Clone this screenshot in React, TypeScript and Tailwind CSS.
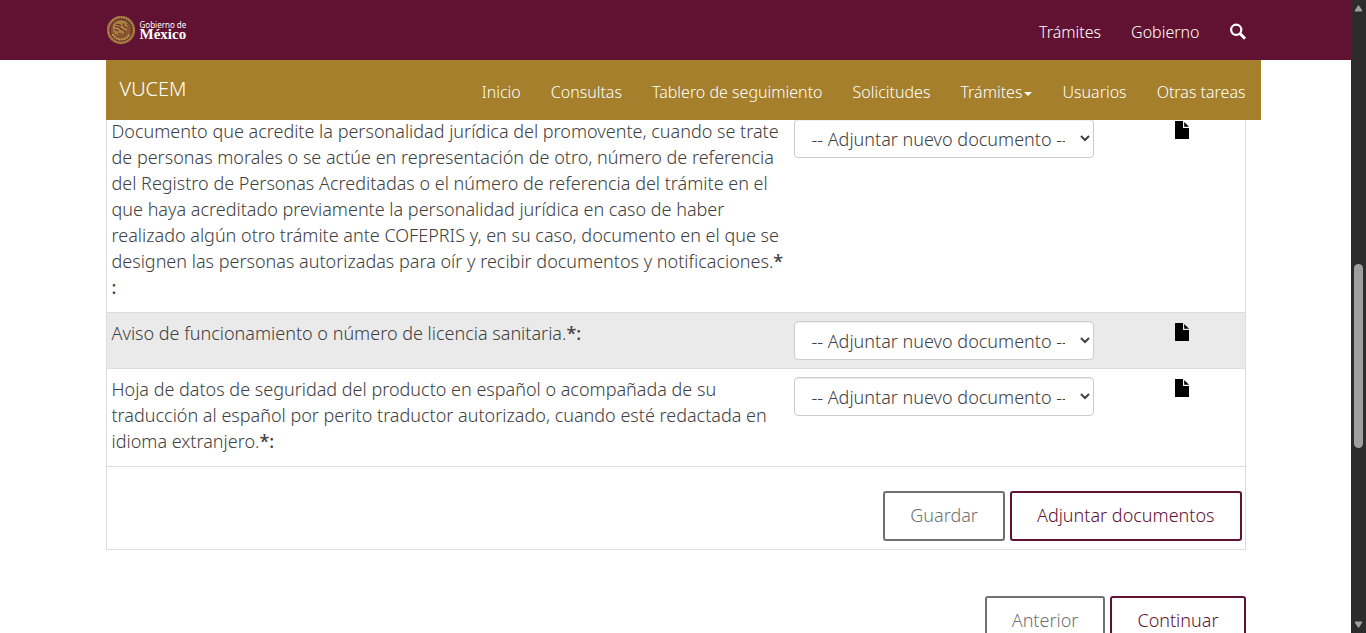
import React from "react";

const navItems = [
  "Inicio",
  "Consultas",
  "Tablero de seguimiento",
  "Solicitudes",
  "Trámites",
  "Usuarios",
  "Otras tareas",
];

const documents = [
  {
    id: "personalidad",
    text: "Documento que acredite la personalidad jurídica del promovente, cuando se trate de personas morales o se actúe en representación de otro, número de referencia del Registro de Personas Acreditadas o el número de referencia del trámite en el que haya acreditado previamente la personalidad jurídica en caso de haber realizado algún otro trámite ante COFEPRIS y, en su caso, documento en el que se designen las personas autorizadas para oír y recibir documentos y notificaciones.",
    mark: "*\n:",
  },
  { id: "aviso", text: "Aviso de funcionamiento o número de licencia sanitaria.", mark: "*:" },
  {
    id: "hoja",
    text: "Hoja de datos de seguridad del producto en español o acompañada de su traducción al español por perito traductor autorizado, cuando esté redactada en idioma extranjero.",
    mark: "*:",
  },
];

function Emblem() {
  return (
    <svg viewBox="0 0 30 30" className="size-[30px]" fill="none" aria-hidden="true">
      <circle cx="15" cy="15" r="14.2" fill="#84532f" />
      <circle cx="15" cy="15" r="12.8" stroke="#b08d4c" strokeWidth="2.200" strokeDasharray="1.600 .8" />
      <circle cx="15" cy="15" r="10.900" stroke="#6b2434" strokeWidth="1" />
      <path
        d="M7 12c0-3 3-6 7-6.500 3-.4 6 .5 8 3l-2.500 0 3 3.500-3 0 2 4-3-.5c0 3-2 4.500-5 4.500-3 0-5.500-1.500-6.500-4.500z"
        fill="#a8843f"
      />
      <path d="M6.500 19c2 4 5 5.500 8.500 5.500s6.500-1.500 8.500-5.500" stroke="#c09a50" strokeWidth="2" strokeDasharray="2 .6" />
      <path
        d="M9 11.500l4 .5 3 3M10 9.500c2-.6 4 0 5 1.500M8.500 14.500l4 1.500M17 8.500l1 3 2 1M16.500 14l2.500 3M12 18.500l4 .5"
        stroke="#6b2434"
        strokeWidth="1.100"
      />
    </svg>
  );
}

function SearchIcon() {
  return (
    <svg viewBox="1 0 16 18" className="h-[18px] w-[16px]" fill="none" stroke="#fff" aria-hidden="true">
      <circle cx="7.200" cy="6.800" r="5.100" strokeWidth="2.200" />
      <path d="M10.900 10.500l5.200 5.200" strokeWidth="3" />
    </svg>
  );
}

function FileIcon() {
  return (
    <svg viewBox="0 0 14 18" className="h-[18px] w-[14px]" aria-hidden="true">
      <path d="M0 0h8v7h6v11H0z" fill="#000" />
      <path d="M9.200 1l4.800 4.800H9.200z" fill="#000" />
    </svg>
  );
}

function OutlineButton({ children, primary = false }: { children: React.ReactNode; primary?: boolean }) {
  return (
    <button
      type="button"
      className={
        primary
          ? "h-[50px] rounded-[3px] border-2 border-[#611232] bg-white px-[25px] pb-[2px] text-[#611232]"
          : "h-[50px] rounded-[3px] border-2 border-[#6f7271] bg-white px-[25px] pb-[2px] text-[#6f7271]"
      }
    >
      {children}
    </button>
  );
}

function ScrollTrack() {
  return (
    <div className="flex w-[15px] shrink-0 flex-col items-center justify-between bg-[#2c2c2c] py-[4px]" aria-hidden="true">
      <svg viewBox="0 0 9 8" className="h-[8px] w-[9px]">
        <path d="M4.500 1.500L8 7H1z" fill="#9f9f9f" stroke="#9f9f9f" strokeLinejoin="round" />
      </svg>
      <div className="flex w-full flex-1 flex-col items-center">
        <div className="flex-[252]" />
        <div className="w-[9px] flex-[184] rounded-full bg-[#9f9f9f]" />
        <div className="flex-[173]" />
      </div>
      <svg viewBox="0 0 9 8" className="h-[8px] w-[9px]">
        <path d="M4.500 6.500L8 1H1z" fill="#9f9f9f" stroke="#9f9f9f" strokeLinejoin="round" />
      </svg>
    </div>
  );
}

export default function App() {
  return (
    <div className="flex h-screen bg-white font-['Noto_Sans',sans-serif] text-[18px] leading-[26px] font-light text-[#404041]">
      <div className="min-w-0 flex-1 overflow-hidden">
        <div className="relative z-10">
          <header className="bg-[#611232]">
            <div className="mx-auto flex h-[60px] max-w-[1170px] items-center justify-between px-[15px]">
              <a href="#" className="flex items-center gap-1 text-white">
                <Emblem />
                <span className="flex flex-col font-['Liberation_Serif',serif] font-bold">
                  <span className="font-['Noto_Sans',sans-serif] text-[8px] leading-[8px] font-normal">Gobierno de</span>
                  <span className="text-[15px] leading-[11px]">México</span>
                </span>
              </a>
              <nav className="flex items-center gap-[30px] pt-1 text-[16px] text-white">
                <a href="#">Trámites</a>
                <a href="#">Gobierno</a>
                <a href="#" aria-label="Buscar">
                  <SearchIcon />
                </a>
              </nav>
            </div>
          </header>
          <div className="mx-auto max-w-[1170px] pl-[15px]">
            <nav className="flex h-[60px] items-center justify-between bg-[#a57f2c] pr-[15px] pl-[14px] text-white">
              <a href="#" className="pb-[2px] text-[20px]">
                VUCEM
              </a>
              <ul className="flex gap-[30px] pt-1 text-[16px]">
                {navItems.map((item, i) => (
                  <li key={item}>
                    <a href="#" className="flex items-center gap-[2px]">
                      {item}
                      {i === 4 && <span className="mt-1 border-x-4 border-t-4 border-x-transparent border-t-white" />}
                    </a>
                  </li>
                ))}
              </ul>
            </nav>
          </div>
        </div>

        <main className="mx-auto -mt-[10px] max-w-[1170px] px-[15px]">
          <table className="w-full table-fixed border-collapse border border-[#dddddd]">
            <colgroup>
              <col className="w-[60%]" />
              <col />
              <col className="w-[126px]" />
            </colgroup>
            <tbody>
              {documents.map((doc) => (
                <tr key={doc.id} className="border-t border-[#dddddd] align-top even:bg-[#eaeaea]">
                  <td className="px-[5px] pt-[7px] pb-3">
                    <label htmlFor={doc.id} className="block">
                      {doc.text}
                      <span className="font-medium whitespace-pre-line">{doc.mark}</span>
                    </label>
                  </td>
                  <td className="px-[5px] py-2">
                    <select
                      id={doc.id}
                      className="block h-[39px] w-[300px] rounded-[4px] border border-[#cccccc] bg-white px-3 text-[18px] text-[#404041] shadow-[inset_0_1px_1px_rgba(0,0,0,0.075)]"
                    >
                      <option>-- Adjuntar nuevo documento --</option>
                    </select>
                  </td>
                  <td className="py-[10px]">
                    <button type="button" aria-label="Ver documento" className="mx-auto block">
                      <FileIcon />
                    </button>
                  </td>
                </tr>
              ))}
              <tr className="border-t border-[#dddddd]">
                <td colSpan={3} className="px-[3px] pt-6 pb-2">
                  <div className="flex justify-end gap-[5px]">
                    <OutlineButton>Guardar</OutlineButton>
                    <OutlineButton primary>Adjuntar documentos</OutlineButton>
                  </div>
                </td>
              </tr>
            </tbody>
          </table>
          <div className="mt-[46px] flex justify-end gap-[5px]">
            <OutlineButton>Anterior</OutlineButton>
            <OutlineButton primary>Continuar</OutlineButton>
          </div>
        </main>
      </div>
      <ScrollTrack />
    </div>
  );
}
